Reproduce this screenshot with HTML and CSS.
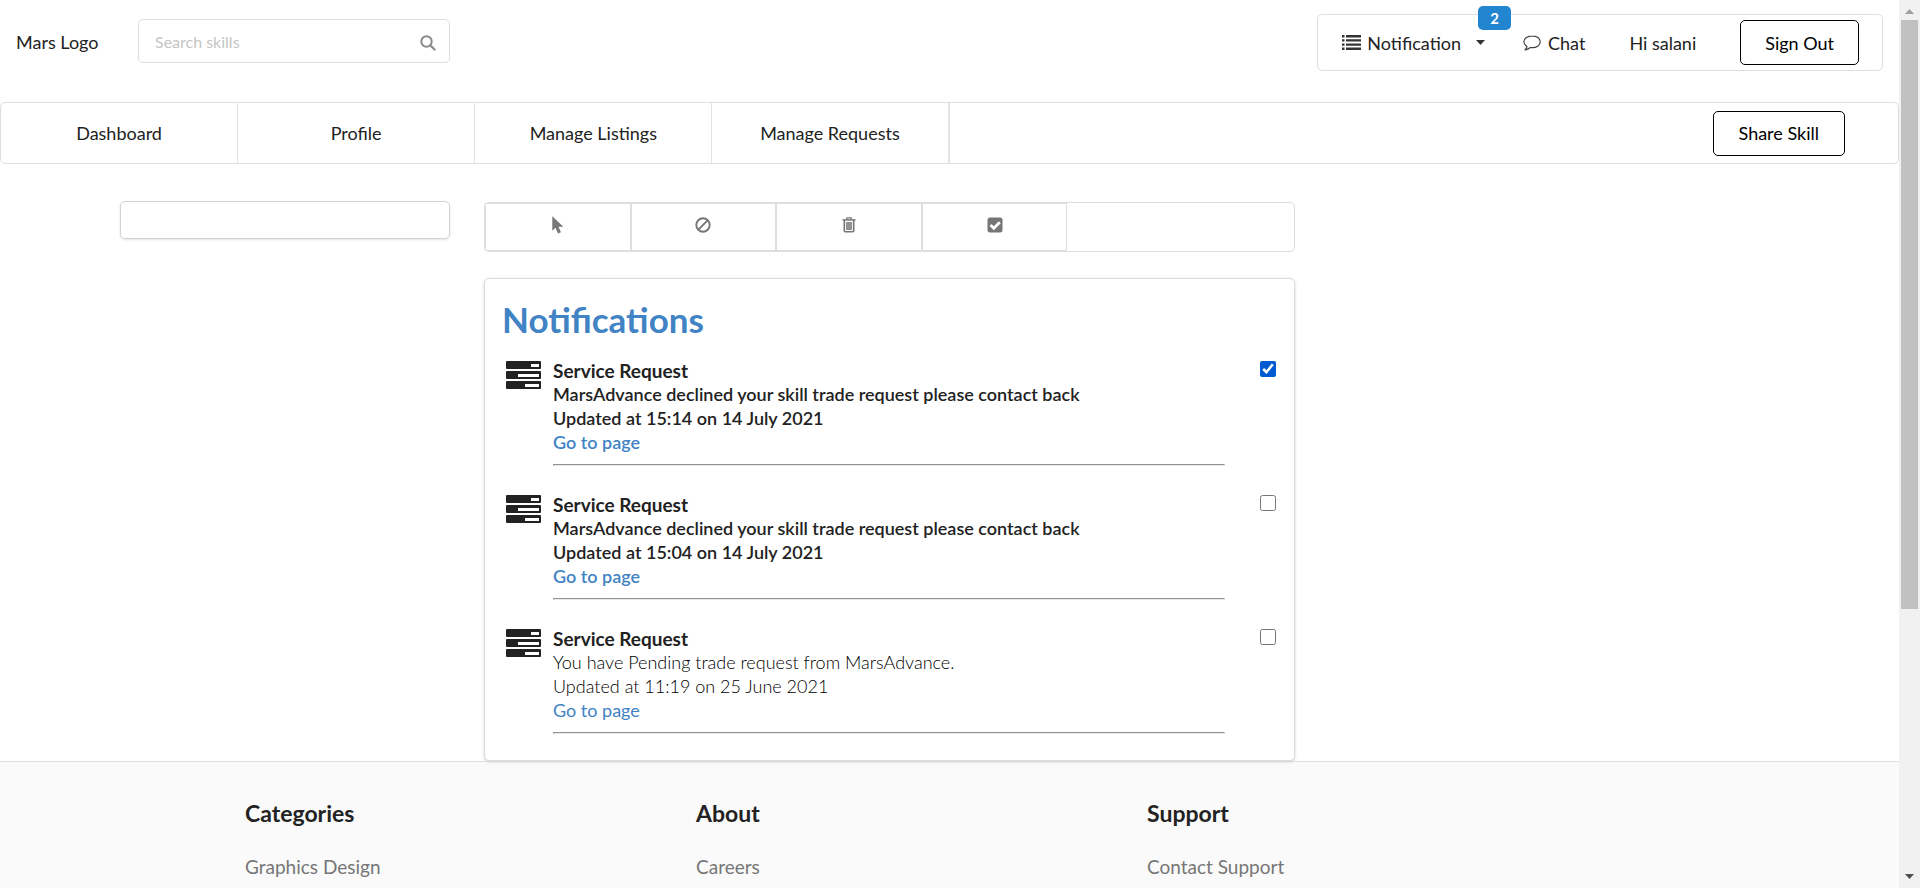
FILE: index.html
```html
<!DOCTYPE html>
<html lang="en">
<head>
<meta charset="utf-8">
<title>Notifications</title>
<link rel="stylesheet" href="styles.css">
</head>
<body>
<svg class="defs" aria-hidden="true">
  <symbol id="tasks" viewBox="0 0 35 28">
    <rect x="0" y="0" width="35" height="8" rx="1"/><rect x="0" y="10" width="35" height="8" rx="1"/><rect x="0" y="20" width="35" height="8" rx="1"/>
    <path fill="#fff" d="M25 3h8v3h-8zM12 13h21v3H12zM19 23h14v3H19z"/>
  </symbol>
</svg>
<div class="window">
  <div class="page">
    <header class="header">
      <span class="logo">Mars Logo</span>
      <div class="search">
        <input class="search-input" type="text" placeholder="Search skills" aria-label="Search skills">
        <svg class="search-icon" viewBox="0 0 16 16" aria-hidden="true"><circle cx="6.5" cy="6.5" r="5.2" fill="none" stroke="#8c8c8c" stroke-width="2"/><path d="M10.5 10.5l4 4" stroke="#8c8c8c" stroke-width="2.4" stroke-linecap="round"/></svg>
      </div>
      <div class="account">
        <button class="account-item notification" type="button">
          <svg class="list-icon" viewBox="0 0 19 15" aria-hidden="true"><path d="M0 0h2.5v2.4H0zM4 0h15v2.4H4zM0 4.2h2.5v2.4H0zM4 4.2h15v2.4H4zM0 8.4h2.5v2.4H0zM4 8.4h15v2.4H4zM0 12.6h2.5V15H0zM4 12.6h15V15H4z"/></svg>
          <span>Notification</span>
          <svg class="caret" viewBox="0 0 9 5" aria-hidden="true"><path d="M0 0h9L4.500 5z"/></svg>
          <span class="badge">2</span>
        </button>
        <a class="account-item chat" href="#">
          <svg class="chat-icon" viewBox="0 0 18 16" aria-hidden="true"><path d="M9.500.8C4.800.8.900 3.300.900 6.700c0 2 1.200 3.600 3.100 4.700-.2 1.300-.9 2.400-2 3.500 2.100-.2 3.900-1.100 5.300-2.400.7.100 1.400.2 2.200.2 4.300 0 7.700-2.600 7.700-6S13.800.8 9.500.8z" fill="none" stroke="#444" stroke-width="1.200" stroke-linejoin="round"/></svg>
          <span>Chat</span>
        </a>
        <span class="account-item user">Hi salani</span>
        <button class="outline-button" type="button">Sign Out</button>
      </div>
    </header>

    <nav class="nav">
      <a class="nav-item" href="#">Dashboard</a>
      <a class="nav-item" href="#">Profile</a>
      <a class="nav-item" href="#">Manage Listings</a>
      <a class="nav-item" href="#">Manage Requests</a>
      <button class="outline-button share" type="button">Share Skill</button>
    </nav>

    <main class="content">
      <aside class="side-box"></aside>
      <section class="feed">
        <div class="toolbar">
          <button class="tool" type="button" aria-label="Select all"><svg class="tool-icon" viewBox="0 0 18 18"><path d="M3.300.3v14.500l3.300-3.100 2.400 5.700 2.900-1.200-2.400-5.500h4.800z"/></svg></button>
          <button class="tool" type="button" aria-label="Unselect all"><svg class="tool-icon" viewBox="0 0 18 18"><circle cx="9" cy="9" r="6.700" fill="none" stroke="#767676" stroke-width="1.900"/><path d="M4.400 13.600l9.200-9.200" stroke="#767676" stroke-width="1.900"/></svg></button>
          <button class="tool" type="button" aria-label="Delete selection"><svg class="tool-icon" viewBox="0 0 18 18"><path fill="none" stroke="#767676" stroke-width="1.200" d="M6.300 3.400L7 1.900h4l.7 1.500"/><path d="M2.500 3.200h13v1.500h-13z"/><path fill="none" stroke="#767676" stroke-width="1.600" d="M4.300 4v10.800q0 1 1 1h7.400q1 0 1-1V4M7 6v8M9 6v8M11 6v8"/></svg></button>
          <button class="tool" type="button" aria-label="Mark selection as read"><svg class="tool-icon" viewBox="0 0 18 18"><rect x="1.500" y="1.500" width="15" height="15" rx="2.500"/><path d="M4.500 9l3.300 3.200 6-6" fill="none" stroke="#fff" stroke-width="2.800"/></svg></button>
        </div>

        <div class="card">
          <h1 class="title">Notifications</h1>
          <article class="notice unread">
            <svg class="notice-icon" aria-hidden="true"><use href="#tasks"/></svg>
            <div class="notice-body">
              <h2 class="notice-title" id="n1">Service Request</h2>
              <p class="notice-text">MarsAdvance declined your skill trade request please contact back</p>
              <p class="notice-text">Updated at 15:14 on 14 July 2021</p>
              <a class="notice-link" href="#">Go to page</a>
              <hr class="rule">
            </div>
            <input class="check" type="checkbox" aria-labelledby="n1" checked>
          </article>
          <article class="notice unread">
            <svg class="notice-icon" aria-hidden="true"><use href="#tasks"/></svg>
            <div class="notice-body">
              <h2 class="notice-title" id="n2">Service Request</h2>
              <p class="notice-text">MarsAdvance declined your skill trade request please contact back</p>
              <p class="notice-text">Updated at 15:04 on 14 July 2021</p>
              <a class="notice-link" href="#">Go to page</a>
              <hr class="rule">
            </div>
            <input class="check" type="checkbox" aria-labelledby="n2">
          </article>
          <article class="notice">
            <svg class="notice-icon" aria-hidden="true"><use href="#tasks"/></svg>
            <div class="notice-body">
              <h2 class="notice-title" id="n3">Service Request</h2>
              <p class="notice-text">You have Pending trade request from MarsAdvance.</p>
              <p class="notice-text">Updated at 11:19 on 25 June 2021</p>
              <a class="notice-link" href="#">Go to page</a>
              <hr class="rule">
            </div>
            <input class="check" type="checkbox" aria-labelledby="n3">
          </article>
        </div>
      </section>
    </main>

    <footer class="footer">
      <div class="footer-column"><h2 class="footer-title">Categories</h2><a class="footer-link" href="#">Graphics Design</a></div>
      <div class="footer-column"><h2 class="footer-title">About</h2><a class="footer-link" href="#">Careers</a></div>
      <div class="footer-column"><h2 class="footer-title">Support</h2><a class="footer-link" href="#">Contact Support</a></div>
    </footer>
  </div>
  <div class="scrollbar" aria-hidden="true">
    <svg class="arrow" viewBox="0 0 21 20"><path fill="#a0a0a0" d="M6 14l4.500-5 4.500 5z"/></svg>
    <div class="thumb"></div>
    <svg class="arrow" viewBox="0 0 21 20"><path fill="#4d4d4d" d="M6 6h9l-4.500 5z"/></svg>
  </div>
</div>
</body>
</html>
```
FILE: styles.css
```css
* { box-sizing: border-box; }
body {
  margin: 0;
  background: #fff;
  color: #222;
  font: 18px/24px Lato, sans-serif;
}
h1, h2, p { margin: 0; }
a { color: inherit; text-decoration: none; }
button { font: inherit; color: inherit; cursor: pointer; }
.defs { display: none; }

.window { display: flex; height: 100vh; overflow: hidden; }
.page { flex: 1; min-width: 0; }

.header {
  display: flex;
  align-items: flex-start;
  height: 102px;
  padding: 14px 16px 0;
}
.logo { width: 122px; padding-top: 16px; }
.search { position: relative; width: 312px; padding-top: 5px; }
.search-input {
  display: block;
  width: 100%;
  height: 44px;
  padding: 0 48px 0 16px;
  border: 1px solid #dedede;
  border-radius: 5px;
  background: #fff;
  font: 16px/20px Lato, sans-serif;
}
.search-input::placeholder { color: #c5c5c5; }
.search-icon { position: absolute; right: 14px; top: 21px; width: 16px; height: 16px; }

.account {
  display: flex;
  align-items: center;
  gap: 38px;
  height: 57px;
  margin-left: auto;
  padding: 0 23px 0 24px;
  border: 1px solid #dedede;
  border-radius: 5px;
}
.account-item { display: flex; align-items: center; }
.notification {
  position: relative;
  gap: 6px;
  padding: 0;
  border: 0;
  background: none;
}
.list-icon { width: 19px; height: 15px; fill: #333; }
.caret { width: 9px; height: 5px; margin-left: 9px; fill: #333; }
.badge {
  position: absolute;
  right: -26px;
  top: -25px;
  width: 33px;
  border-radius: 5px;
  background: #2185d0;
  color: #fff;
  font-size: 15px;
  font-weight: 700;
  text-align: center;
}
.chat { gap: 7px; }
.chat-icon { width: 18px; height: 18px; }
.user { margin: 0 6px; }
.outline-button {
  height: 45px;
  padding: 0 24px;
  border: 1px solid #000;
  border-radius: 5px;
  background: #fff;
  color: #000;
}

.nav {
  display: flex;
  align-items: center;
  height: 62px;
  border: 1px solid #dedede;
  border-radius: 5px;
}
.nav-item {
  display: flex;
  align-items: center;
  justify-content: center;
  width: 12.5%;
  height: 100%;
  border-right: 1px solid #e4e4e4;
}
.nav-item:last-of-type { border-right-width: 2px; }
.share { margin: 0 53px 0 auto; padding: 0 25px; }

.content {
  display: grid;
  grid-template-columns: 330fr 811fr 570fr;
  column-gap: 34px;
  align-items: start;
  padding: 37px 0 0 120px;
}
.side-box {
  height: 38px;
  border: 1px solid #d2d2d2;
  border-radius: 5px;
  box-shadow: 0 1px 3px #e4e4e4;
}
.toolbar {
  display: flex;
  height: 50px;
  margin-top: 1px;
  border: 1px solid #dedede;
  border-radius: 5px;
}
.tool {
  display: flex;
  justify-content: center;
  width: 18%;
  padding: 12px 0 0;
  border: 1px solid #dedede;
  background: #fff;
}
.tool-icon { width: 18px; height: 18px; fill: #767676; }

.card {
  position: relative;
  margin-top: 26px;
  padding: 20px 18px 1px 17px;
  border: 1px solid #dcdcdc;
  border-radius: 5px;
  background: #fff;
  box-shadow: 0 1px 3px #d4d4d5;
}
.title { margin-bottom: 18px; color: #4183c4; font-size: 35px; line-height: 40px; }
.notice {
  display: grid;
  grid-template-columns: 51px 1fr 51px;
  align-items: start;
  height: 134px;
}
.notice-icon { width: 35px; height: 28px; margin: 4px 0 0 4px; fill: #222; }
.notice-title { padding-top: 2px; font-size: 19px; line-height: 23px; }
.notice-text { color: #000; font-weight: 300; }
.notice-link { display: block; color: #4183c4; }
.unread .notice-text, .unread .notice-link { font-weight: 600; }
.unread .notice-text { color: #222; }
.rule {
  margin: 10px 0 0;
  border: 1px solid #e8e8e8;
  border-top-color: #929296;
  border-left-color: #929296;
}
.check { justify-self: end; width: 16px; height: 16px; margin: 4px 0 0; accent-color: #005bd3; }

.footer {
  display: grid;
  grid-template-columns: repeat(3, 451px);
  padding: 39px 0 40px 245px;
  border-top: 1px solid #dedede;
  background: #fafafa;
}
.footer-title { margin-bottom: 30px; font-size: 23px; line-height: 24px; }
.footer-link { display: block; color: #767676; font-size: 19px; }

.scrollbar {
  display: flex;
  flex-direction: column;
  align-items: center;
  width: 21px;
  background: #f1f1f1;
}
.arrow { width: 21px; height: 20px; }
.thumb { width: 17px; height: 66.3%; margin-bottom: auto; background: #c1c1c1; }
```
